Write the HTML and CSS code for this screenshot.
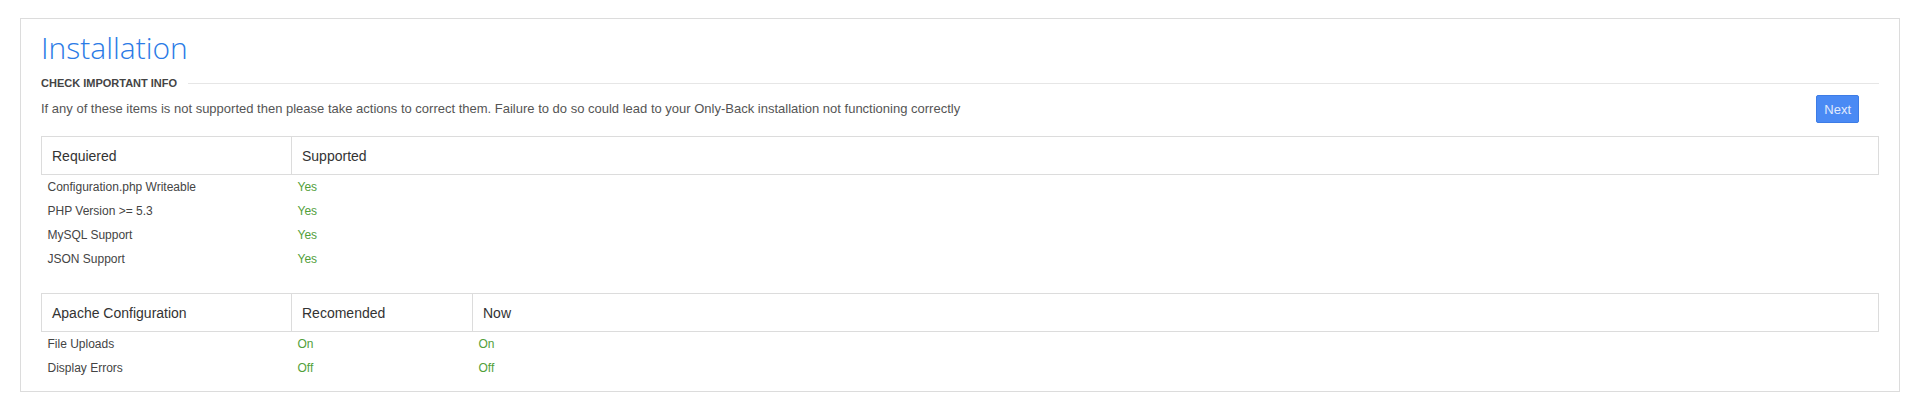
FILE: index.html
```html
<!DOCTYPE html>
<html lang="en">
<head>
<meta charset="utf-8">
<title>Installation</title>
<link rel="stylesheet" href="styles.css">
</head>
<body>
<div class="panel">
  <h1 class="title">Installation</h1>
  <div class="section-head">
    <span class="section-label">CHECK IMPORTANT INFO</span>
    <span class="section-rule"></span>
  </div>
  <div class="intro">
    <p class="intro-text">If any of these items is not supported then please take actions to correct them. Failure to do so could lead to your Only-Back installation not functioning correctly</p>
    <button class="btn-next" type="button">Next</button>
  </div>

  <table class="check-table">
    <colgroup><col class="col-a"><col></colgroup>
    <thead>
      <tr><th>Requiered</th><th>Supported</th></tr>
    </thead>
    <tbody>
      <tr><td>Configuration.php Writeable</td><td class="ok">Yes</td></tr>
      <tr><td>PHP Version &gt;= 5.3</td><td class="ok">Yes</td></tr>
      <tr><td>MySQL Support</td><td class="ok">Yes</td></tr>
      <tr><td>JSON Support</td><td class="ok">Yes</td></tr>
    </tbody>
  </table>

  <table class="check-table second">
    <colgroup><col class="col-a"><col class="col-b"><col></colgroup>
    <thead>
      <tr><th>Apache Configuration</th><th>Recomended</th><th>Now</th></tr>
    </thead>
    <tbody>
      <tr><td>File Uploads</td><td class="ok">On</td><td class="ok">On</td></tr>
      <tr><td>Display Errors</td><td class="ok">Off</td><td class="ok">Off</td></tr>
    </tbody>
  </table>
</div>
</body>
</html>
```

FILE: styles.css
```css
html, body {
  margin: 0;
  padding: 0;
  background: #fff;
}

body {
  padding: 18px 16px 0 20px;
  font-family: "Liberation Sans", Arial, sans-serif;
  color: #444;
}

.panel {
  box-sizing: border-box;
  width: 1880px;
  border: 1px solid #dcdcdc;
  padding: 11px 20px 11px 20px;
}

.title {
  margin: 0;
  font-family: "Open Sans", sans-serif;
  font-weight: 300;
  font-size: 30px;
  line-height: 35px;
  color: #2b7be6;
}

.section-head {
  display: flex;
  align-items: center;
  gap: 11px;
  margin-top: 12px;
  height: 13px;
}

.section-label {
  font-size: 11px;
  line-height: 13px;
  font-weight: bold;
  color: #444;
  white-space: nowrap;
}

.section-rule {
  flex: 1;
  height: 1px;
  background: #e6e6e6;
}

.intro {
  display: flex;
  align-items: center;
  justify-content: space-between;
  margin-top: 5px;
  padding-right: 20px;
}

.intro-text {
  margin: 0;
  font-size: 13px;
  line-height: 18px;
  color: #555;
}

.btn-next {
  height: 28px;
  padding: 0 7px;
  border: 1px solid #3d7ce6;
  border-radius: 2px;
  background: #4a8af4;
  color: #e2ebfc;
  font-family: "Liberation Sans", Arial, sans-serif;
  font-size: 13px;
}

.check-table {
  width: 100%;
  margin-top: 13px;
  border-collapse: collapse;
  table-layout: fixed;
}

.check-table.second {
  margin-top: 22px;
}

.col-a { width: 250px; }
.col-b { width: 181px; }

.check-table th {
  border: 1px solid #dcdcdc;
  padding: 9px 10px 8px;
  font-size: 14px;
  line-height: 20px;
  font-weight: normal;
  text-align: left;
  color: #333;
}

.check-table td {
  padding: 4px 6px;
  font-size: 12px;
  line-height: 16px;
  color: #444;
}

.check-table td.ok {
  color: #52a03a;
}
```
